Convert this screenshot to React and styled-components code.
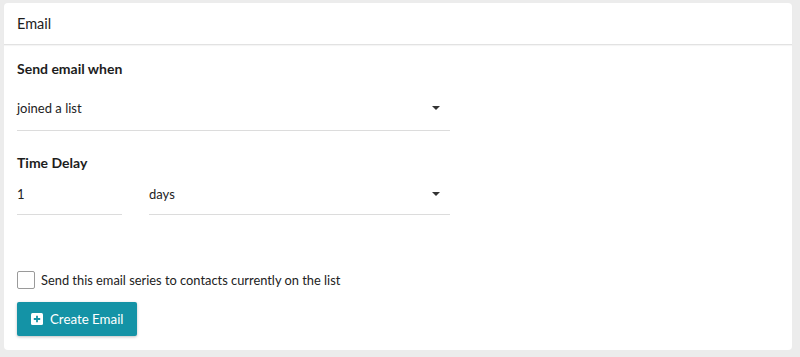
import React from "react";
import styled, { createGlobalStyle } from "styled-components";

const Global = createGlobalStyle`
  html, body { margin: 0; padding: 0; background: #ececec; }
  body { font-family: Lato, "Noto Sans", sans-serif; color: #222; }
  * { box-sizing: border-box; }
`;

const Page = styled.div`
  padding: 3px 8px 7px 4px;
`;

const Card = styled.section`
  background: #fff;
  border-radius: 4px;
  height: 347px;
  display: flex;
  flex-direction: column;
`;

const Header = styled.header`
  height: 42px;
  display: flex;
  align-items: center;
  padding: 0 13px;
  font-size: 14.5px;
  color: #1d1d1d;
  border-bottom: 1px solid #e2e2e2;
  box-shadow: 0 1px 1px rgba(0, 0, 0, 0.04);
`;

const Body = styled.div`
  padding: 14px 13px 13px;
  display: flex;
  flex-direction: column;
`;

const Label = styled.div`
  font-weight: 700;
  font-size: 14px;
  line-height: 20px;
  color: #1d1d1d;
  margin-top: ${(p) => p.$top || 0}px;
`;

const Field = styled.div`
  width: ${(p) => p.$w}px;
  height: ${(p) => p.$h}px;
  border-bottom: 1px solid #dcdcdc;
  display: flex;
  align-items: center;
  justify-content: space-between;
  font-size: 13px;
  color: #222;
  padding-right: 10px;
`;

const Row = styled.div`
  display: flex;
  gap: 27px;
  margin-top: ${(p) => p.$top || 0}px;
`;

const Caret = styled.span`
  width: 0;
  height: 0;
  border-left: 4px solid transparent;
  border-right: 4px solid transparent;
  border-top: 4px solid #333;
`;

const CheckRow = styled.label`
  display: flex;
  align-items: center;
  gap: 6px;
  margin-top: 56px;
  font-size: 12.85px;
  color: #222;
`;

const Box = styled.span`
  width: 18px;
  height: 18px;
  border: 1.5px solid #9a9a9a;
  border-radius: 2px;
  background: #fff;
`;

const Button = styled.button`
  margin-top: 13px;
  width: 120px;
  height: 34px;
  border: none;
  border-radius: 2px;
  background: #1493a6;
  color: #fff;
  font-family: inherit;
  font-size: 13.3px;
  display: flex;
  align-items: center;
  gap: 7px;
  padding: 0 0 0 14px;
  box-shadow: 0 1px 3px rgba(0, 0, 0, 0.25);
`;

const PlusIcon = () => (
  <svg width="12" height="12" viewBox="0 0 12 12">
    <rect x="0" y="0" width="12" height="12" rx="1.5" fill="#fff" />
    <path d="M6 2.8v6.4M2.8 6h6.4" stroke="#1493a6" strokeWidth="1.8" />
  </svg>
);

export default function App() {
  return (
    <>
      <Global />
      <Page>
        <Card>
          <Header>Email</Header>
          <Body>
            <Label>Send email when</Label>
            <Row $top={7}>
              <Field $w={433} $h={45}>
                <span>joined a list</span>
                <Caret />
              </Field>
            </Row>
            <Label $top={22}>Time Delay</Label>
            <Row>
              <Field $w={105} $h={42}>
                <span>1</span>
              </Field>
              <Field $w={301} $h={42}>
                <span>days</span>
                <Caret />
              </Field>
            </Row>
            <CheckRow>
              <Box />
              <span>Send this email series to contacts currently on the list</span>
            </CheckRow>
            <Button>
              <PlusIcon />
              Create Email
            </Button>
          </Body>
        </Card>
      </Page>
    </>
  );
}
